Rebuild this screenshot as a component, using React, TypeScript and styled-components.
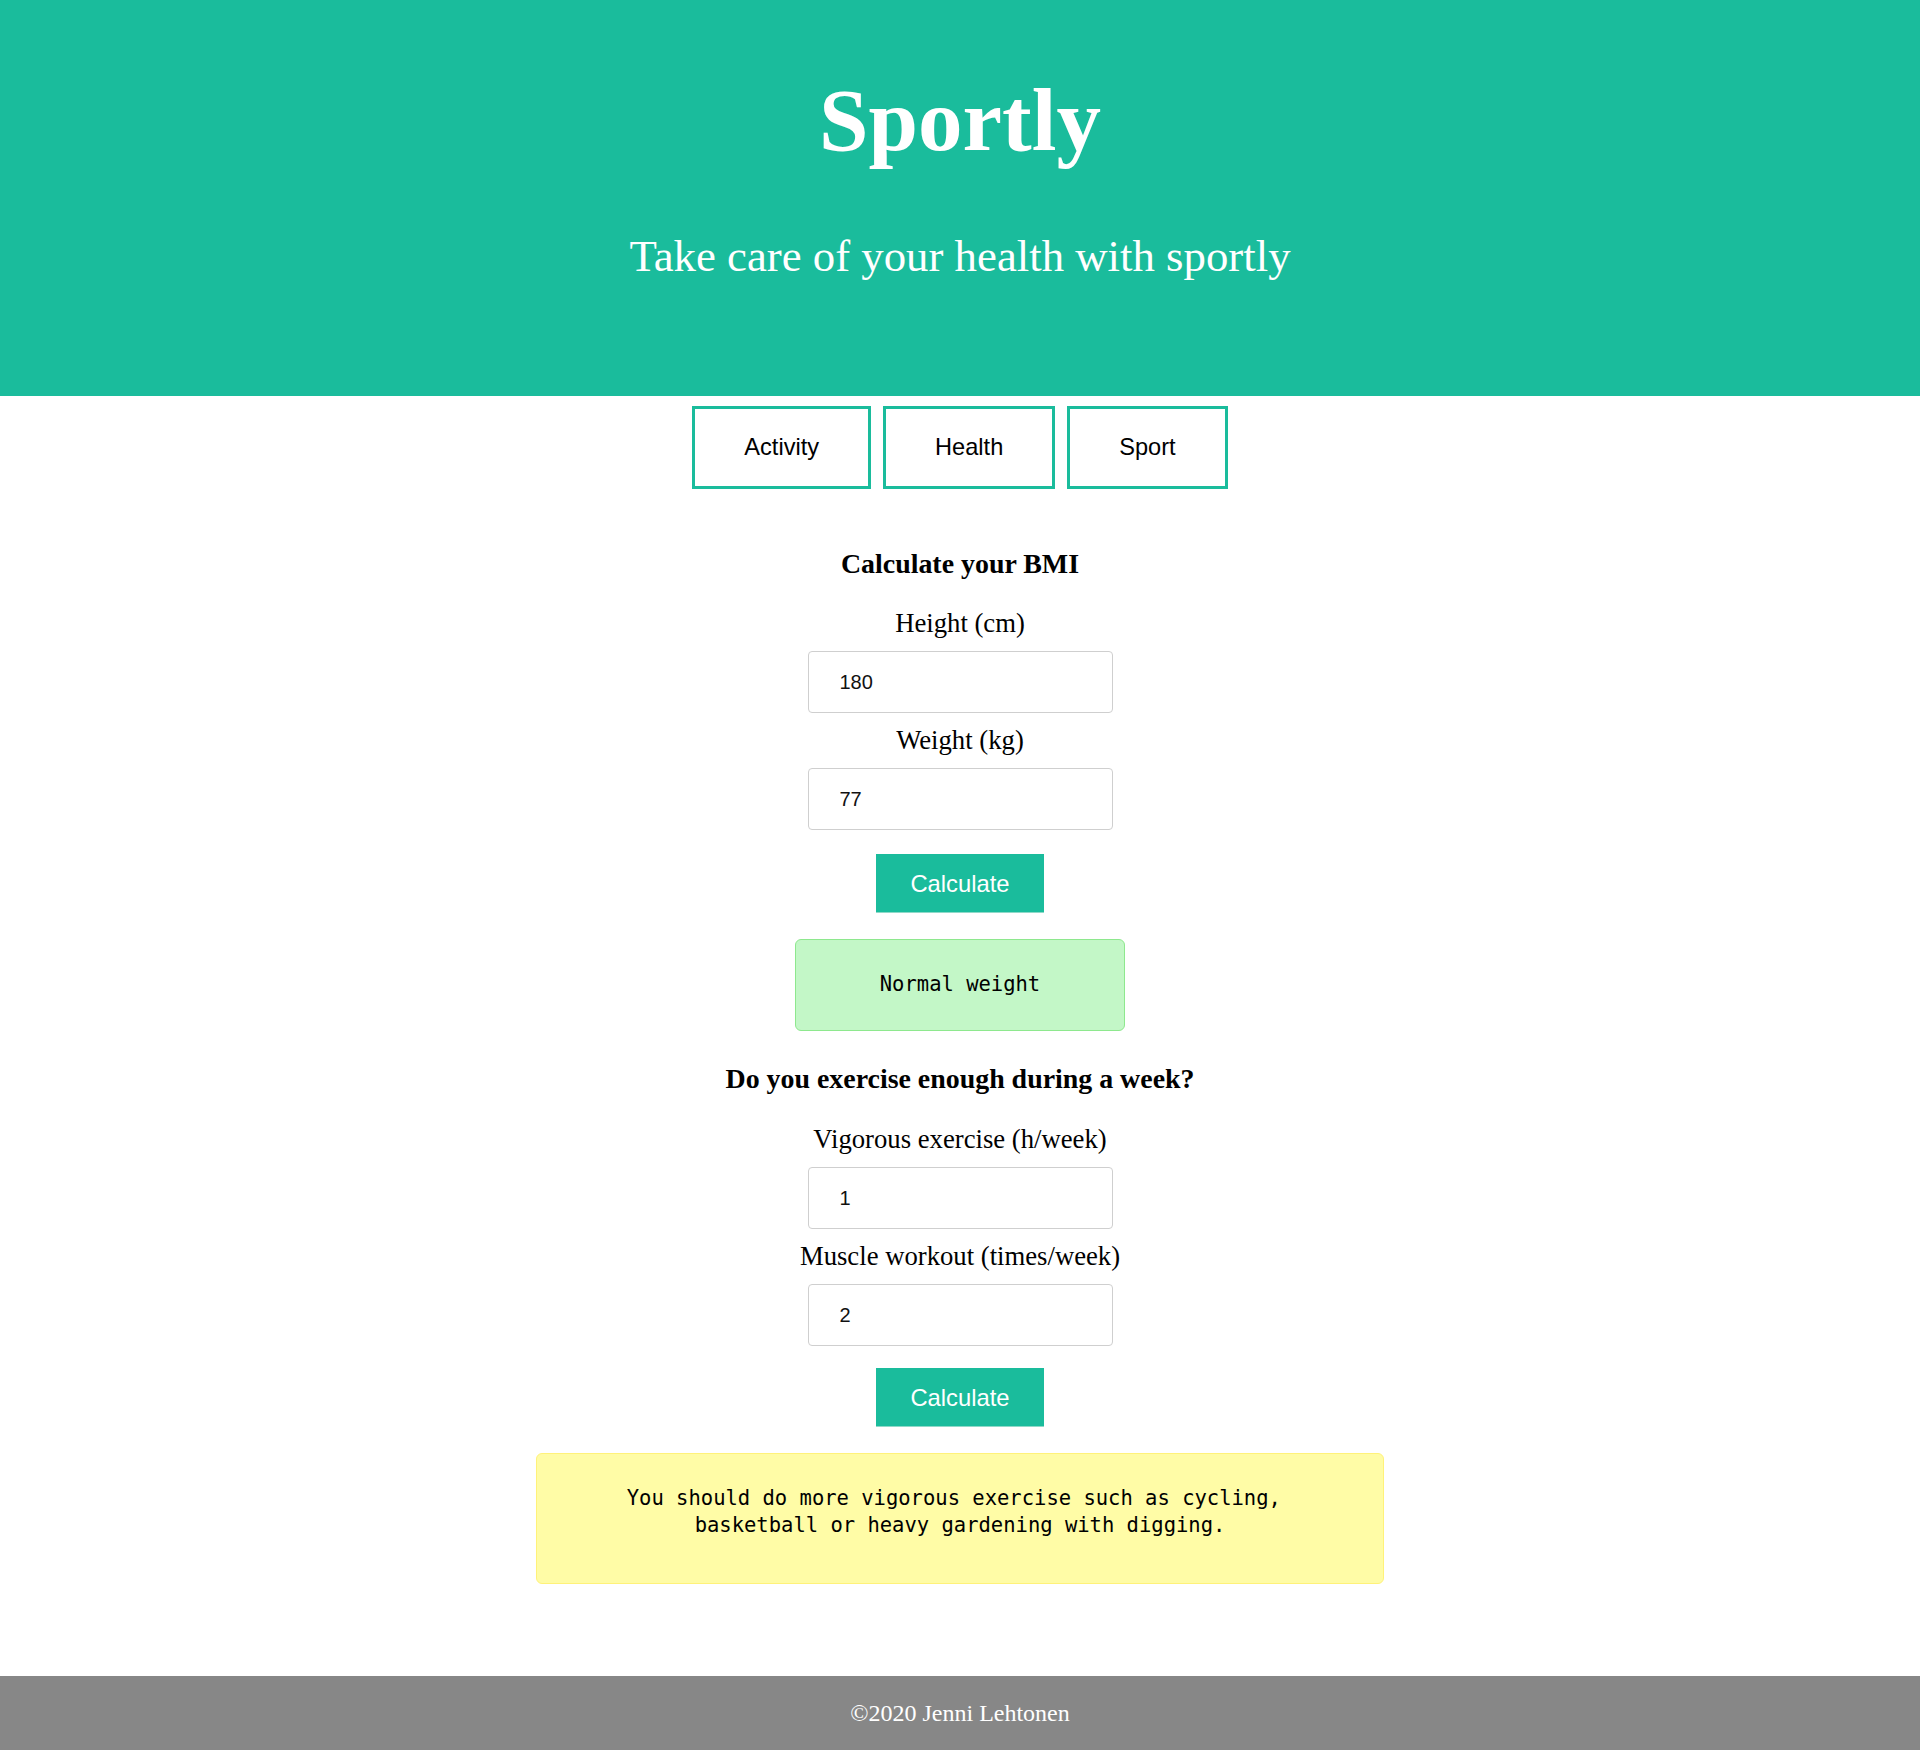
import React from "react";
import styled, { createGlobalStyle } from "styled-components";

const GlobalStyle = createGlobalStyle`
  html, body {
    margin: 0;
    padding: 0;
    background: #ffffff;
  }
  body {
    font-family: "Liberation Serif", "Times New Roman", serif;
    color: #000;
  }
  * { box-sizing: border-box; }
`;

const TEAL = "#1abc9c";

const Page = styled.div`
  display: flex;
  flex-direction: column;
  min-height: 1750px;
`;

const Header = styled.header`
  background: ${TEAL};
  color: #fff;
  text-align: center;
  padding: 70px 0 115px;
`;

const Title = styled.h1`
  margin: 0;
  font-family: "Liberation Serif", "Times New Roman", serif;
  font-weight: bold;
  font-size: 89px;
  line-height: 100px;
`;

const Subtitle = styled.p`
  margin: 61px 0 0;
  font-family: "Liberation Serif", "Times New Roman", serif;
  font-size: 44.8px;
  line-height: 50px;
`;

const Nav = styled.nav`
  display: flex;
  justify-content: center;
  gap: 12px;
  margin-top: 10px;
`;

const NavButton = styled.button`
  font-family: "Liberation Sans", Arial, sans-serif;
  font-size: 23.6px;
  line-height: 27px;
  color: #000;
  background: #fff;
  border: 3px solid ${TEAL};
  border-radius: 0;
  padding: 25px 49px;
  cursor: pointer;
`;

const Main = styled.main`
  display: flex;
  flex-direction: column;
  align-items: center;
  flex: 1;
  padding-bottom: 80px;
`;

const SectionTitle = styled.h2<{ $top: number }>`
  margin: ${(p) => p.$top}px 0 0;
  font-family: "Liberation Serif", "Times New Roman", serif;
  font-weight: bold;
  font-size: 27.9px;
  line-height: 32px;
`;

const Label = styled.label<{ $top: number }>`
  display: block;
  margin-top: ${(p) => p.$top}px;
  font-family: "Liberation Serif", "Times New Roman", serif;
  font-size: 26.7px;
  line-height: 30px;
`;

const Input = styled.input`
  display: block;
  margin-top: 13px;
  width: 305px;
  height: 62px;
  padding: 0 0 0 31px;
  border: 1px solid #cfcfcf;
  border-radius: 4px;
  font-family: "Liberation Sans", Arial, sans-serif;
  font-size: 20px;
  color: #111;
  background: #fff;
  outline: none;
`;

const CalcButton = styled.button<{ $top: number }>`
  margin-top: ${(p) => p.$top}px;
  height: 59px;
  padding: 0 34px;
  background: ${TEAL};
  color: #fff;
  border: none;
  border-bottom: 1px solid #8fd9c8;
  font-family: "Liberation Sans", Arial, sans-serif;
  font-size: 23.8px;
  line-height: 27px;
  cursor: pointer;
`;

const ResultBox = styled.div<{ $variant: "green" | "yellow" }>`
  display: inline-block;
  max-width: 848px;
  margin-top: 26px;
  padding: 31px 84px ${(p) => (p.$variant === "yellow" ? "44px" : "32px")};
  border-radius: 6px;
  border: 1px solid ${(p) => (p.$variant === "green" ? "#8ee88e" : "#fff27a")};
  background: ${(p) => (p.$variant === "green" ? "#c3f7c7" : "#fffca6")};
  font-family: "DejaVu Sans Mono", "Liberation Mono", monospace;
  font-size: 20.5px;
  line-height: 27px;
  text-align: center;
  color: #000;
`;

const Footer = styled.footer`
  background: #878787;
  color: #fff;
  text-align: center;
  padding: 23px 0 23px;
  font-family: "Liberation Serif", "Times New Roman", serif;
  font-size: 24px;
  line-height: 28px;
`;

export default function App() {
  return (
    <Page>
      <GlobalStyle />
      <Header>
        <Title>Sportly</Title>
        <Subtitle>Take care of your health with sportly</Subtitle>
      </Header>
      <Nav>
        <NavButton>Activity</NavButton>
        <NavButton>Health</NavButton>
        <NavButton>Sport</NavButton>
      </Nav>
      <Main>
        <SectionTitle $top={59}>Calculate your BMI</SectionTitle>
        <Label $top={28}>Height (cm)</Label>
        <Input type="number" defaultValue="180" />
        <Label $top={12}>Weight (kg)</Label>
        <Input type="number" defaultValue="77" />
        <CalcButton $top={24}>Calculate</CalcButton>
        <ResultBox $variant="green">Normal weight</ResultBox>

        <SectionTitle $top={32}>Do you exercise enough during a week?</SectionTitle>
        <Label $top={29}>Vigorous exercise (h/week)</Label>
        <Input type="number" defaultValue="1" />
        <Label $top={12}>Muscle workout (times/week)</Label>
        <Input type="number" defaultValue="2" />
        <CalcButton $top={22}>Calculate</CalcButton>
        <ResultBox $variant="yellow">
          You should do more vigorous exercise such as cycling,{"\u00a0"} basketball or heavy gardening with digging.
        </ResultBox>
      </Main>
      <Footer>©2020 Jenni Lehtonen</Footer>
    </Page>
  );
}
